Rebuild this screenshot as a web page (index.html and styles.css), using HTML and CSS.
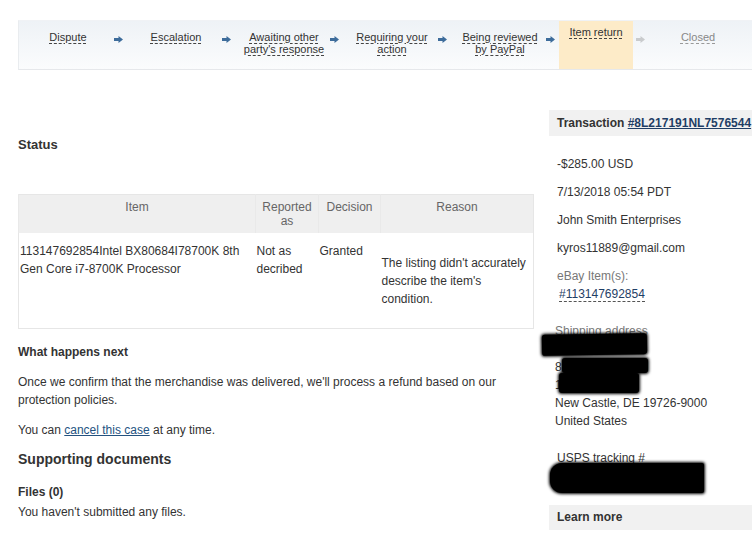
FILE: index.html
```html
<!DOCTYPE html>
<html lang="en">
<head>
    <meta charset="UTF-8">
    <meta name="viewport" content="width=device-width, initial-scale=1.0">
    <title>Case details</title>
    <link rel="stylesheet" href="styles.css">
</head>
<body>
    <!-- case progress -->
    <div class="progress">
        <div class="step"><span class="step-label">Dispute</span></div>
        <div class="arrow"><svg width="9" height="7" viewBox="0 0 9 7"><path d="M0 2h4.5V0L9 3.5 4.5 7V5H0z"/></svg></div>
        <div class="step"><span class="step-label">Escalation</span></div>
        <div class="arrow"><svg width="9" height="7" viewBox="0 0 9 7"><path d="M0 2h4.5V0L9 3.5 4.5 7V5H0z"/></svg></div>
        <div class="step"><span class="step-label">Awaiting other party's response</span></div>
        <div class="arrow"><svg width="9" height="7" viewBox="0 0 9 7"><path d="M0 2h4.5V0L9 3.5 4.5 7V5H0z"/></svg></div>
        <div class="step"><span class="step-label">Requiring your action</span></div>
        <div class="arrow"><svg width="9" height="7" viewBox="0 0 9 7"><path d="M0 2h4.5V0L9 3.5 4.5 7V5H0z"/></svg></div>
        <div class="step"><span class="step-label">Being reviewed by PayPal</span></div>
        <div class="arrow"><svg width="9" height="7" viewBox="0 0 9 7"><path d="M0 2h4.5V0L9 3.5 4.5 7V5H0z"/></svg></div>
        <div class="step active"><span class="step-label">Item return</span></div>
        <div class="arrow off"><svg width="9" height="7" viewBox="0 0 9 7"><path d="M0 2h4.5V0L9 3.5 4.5 7V5H0z"/></svg></div>
        <div class="step future"><span class="step-label">Closed</span></div>
    </div>

    <div class="content">
        <div class="main">
            <h2 class="status-title">Status</h2>

            <table class="case-table">
                <colgroup>
                    <col class="col-item">
                    <col class="col-reported">
                    <col class="col-decision">
                    <col class="col-reason">
                </colgroup>
                <thead>
                    <tr>
                        <th>Item</th>
                        <th>Reported as</th>
                        <th>Decision</th>
                        <th>Reason</th>
                    </tr>
                </thead>
                <tbody>
                    <tr class="item-row">
                        <td>113147692854Intel BX80684I78700K 8th Gen Core i7-8700K Processor</td>
                        <td>Not as decribed</td>
                        <td>Granted</td>
                        <td class="reason">The listing didn't accurately describe the item's condition.</td>
                    </tr>
                </tbody>
            </table>

            <h3 class="next-title">What happens next</h3>
            <p class="text">Once we confirm that the merchandise was delivered, we'll process a refund based on our protection policies.</p>
            <p class="text">You can <a href="#" class="link">cancel this case</a> at any time.</p>

            <h2 class="docs-title">Supporting documents</h2>
            <h4 class="files-title">Files (0)</h4>
            <p class="files-text">You haven't submitted any files.</p>
        </div>

        <div class="sidebar">
            <div class="side-head">Transaction <a href="#" class="tx-link">#8L217191NL7576544</a></div>

            <p class="side-row first">-$285.00 USD</p>
            <p class="side-row">7/13/2018 05:54 PDT</p>
            <p class="side-row">John Smith Enterprises</p>
            <p class="side-row">kyros11889@gmail.com</p>
            <div class="side-row">
                <span class="muted">eBay Item(s):</span><br>
                <a href="#" class="item-link">#113147692854</a>
            </div>

            <div class="address">
                <span class="muted">Shipping address</span><br>
                John Smith<br>
                8 Redacted Road<br>
                1 Redacted<br>
                New Castle, DE 19726-9000<br>
                United States
            </div>

            <div class="tracking">
                USPS tracking #<br>
                9400000000000000000000
            </div>

            <!-- redacted by the person who took the screenshot -->
            <div class="redact r1"></div>
            <div class="redact r2"></div>
            <div class="redact r3"></div>
            <div class="redact r4"></div>

            <div class="side-head learn">Learn more</div>
        </div>
    </div>
</body>
</html>
```

FILE: styles.css
```css
body {
    margin: 0;
    font-family: "Liberation Sans", Arial, sans-serif;
    font-size: 12px;
    color: #333;
    background: #fff;
    overflow: hidden;
}
.progress {
    display: flex;
    margin: 20px 0 0 18px;
    height: 48px;
    padding-left: 3px;
    border-top: 1px solid #f0f2f5;
    border-bottom: 1px solid #e6e8eb;
    border-left: 1px solid #e9ecef;
    background: linear-gradient(#eef2f6, #fbfcfd);
}
.step {
    width: 92px;
    box-sizing: border-box;
    flex-shrink: 0;
    padding: 10px 5px 0;
    text-align: center;
    font-size: 11px;
    line-height: 12px;
}
.step-label {
    color: #333;
    text-decoration: underline dashed #444;
    text-underline-offset: 2px;
}
.step.active {
    width: 74px;
    margin-left: -3px;
    padding: 5px 2px 0;
    background: #fdebc8;
}
.step.future .step-label {
    color: #888;
    text-decoration-color: #999;
}
.arrow {
    width: 16px;
    flex-shrink: 0;
    padding-top: 15px;
}
.arrow svg {
    display: block;
    fill: #3d6c9b;
}
.arrow.off {
    width: 19px;
}
.arrow.off svg {
    fill: #c9cbcd;
    margin-left: 3px;
}
.content {
    display: flex;
    gap: 16px;
    margin-top: 40px;
    padding-left: 18px;
}
.main {
    width: 515px;
    flex-shrink: 0;
    padding-top: 27px;
}
.status-title {
    margin: 0;
    font-size: 13px;
    line-height: 16px;
}
.case-table {
    margin-top: 41px;
    width: 516px;
    table-layout: fixed;
    border-collapse: collapse;
    border: 1px solid #e6e6e6;
    line-height: 18px;
}
.col-item { width: 237px; }
.col-reported { width: 63px; }
.col-decision { width: 62px; }
.col-reason { width: 153px; }
.case-table th {
    height: 38px;
    box-sizing: border-box;
    padding: 5px 1px 0;
    vertical-align: top;
    background: #efefef;
    border-left: 1px solid #e9e9e9;
    font-weight: normal;
    color: #666;
    line-height: 14px;
}
.item-row {
    height: 96px;
}
.item-row td {
    padding: 9px 4px 0 1px;
    vertical-align: top;
}
.item-row td.reason {
    padding-top: 21px;
}
.next-title {
    margin: 14px 0 0;
    font-size: 12px;
    line-height: 18px;
}
.text {
    margin: 12px 0 0;
    line-height: 18px;
}
.link {
    color: #24527f;
}
.docs-title {
    margin: 10px 0 0;
    font-size: 14px;
    line-height: 20px;
}
.files-title {
    margin: 14px 0 0;
    font-size: 12px;
    line-height: 18px;
}
.files-text {
    margin: 2px 0 0;
    line-height: 18px;
}
.sidebar {
    position: relative;
    flex: 1;
    min-width: 0;
}
.side-head {
    height: 26px;
    line-height: 26px;
    padding-left: 8px;
    background: #f1f1f1;
    font-weight: bold;
    white-space: nowrap;
}
.tx-link {
    color: #1f3e66;
}
.side-row {
    margin: 10px 0 0;
    padding-left: 8px;
    line-height: 18px;
}
.side-row.first {
    margin-top: 19px;
}
.muted {
    color: #777;
}
.item-link {
    margin-left: 2px;
    color: #1f3e66;
    text-decoration: none;
    border-bottom: 1px dashed #555;
}
.address {
    margin-top: 19px;
    padding-left: 6px;
    line-height: 18px;
}
.tracking {
    margin-top: 19px;
    padding-left: 8px;
    line-height: 18px;
}
.side-head.learn {
    margin-top: 20px;
    height: 25px;
    line-height: 25px;
}
.redact {
    position: absolute;
    background: #000;
    border-radius: 3px;
    box-shadow: 0 0 3px 1px #000;
}
.r1 { left: -7px; top: 224px; width: 105px; height: 21px; transform: rotate(-1deg); }
.r2 { left: 13px; top: 248px; width: 86px; height: 15px; }
.r3 { left: 10px; top: 263px; width: 80px; height: 20px; }
.r4 { left: 1px; top: 353px; width: 154px; height: 30px; border-radius: 12px 2px 2px 12px; }
```
